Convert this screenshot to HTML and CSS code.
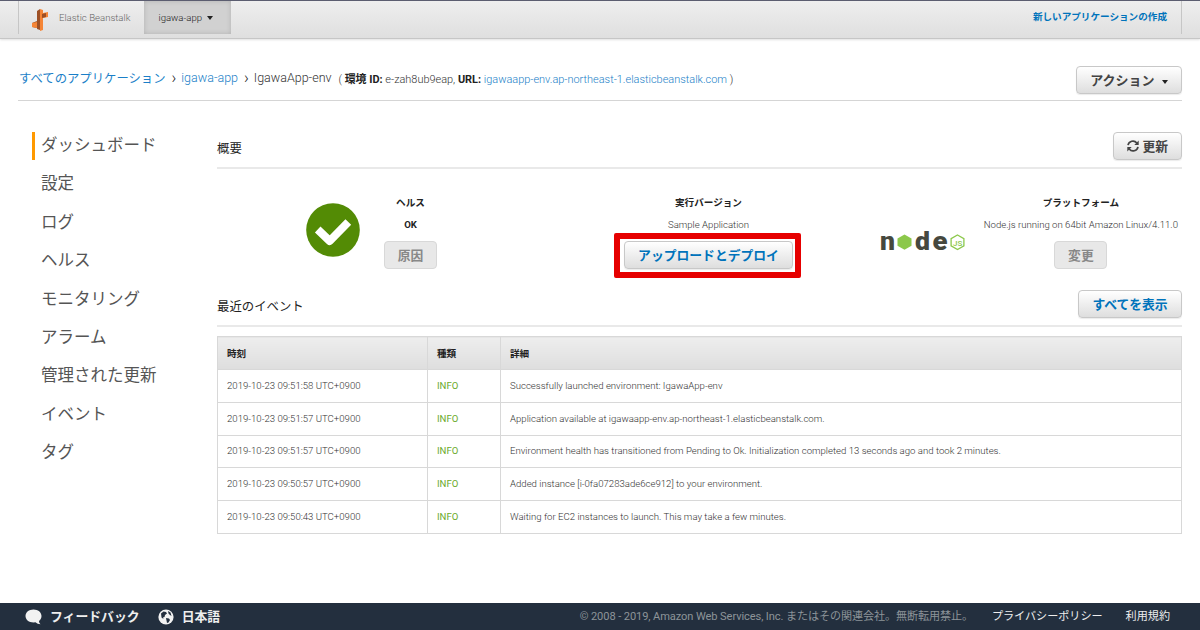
FILE: index.html
```
<!DOCTYPE html>
<html lang="ja">
<head>
    <meta charset="UTF-8">
    <meta name="viewport" content="width=device-width, initial-scale=1.0">
    <title>Elastic Beanstalk - IgawaApp-env</title>
    <link rel="stylesheet" href="styles.css">
</head>
<body>
    <header class="topbar">
        <div class="topbar-inner">
            <a class="brand" href="#">
                <svg width="17" height="22" viewBox="0 0 17 22">
                    <path fill="#9d5025" d="M5 2l3-2v21l-3-1zM0 14l5-2v7l-5-1z"/>
                    <path fill="#f58536" d="M8 0l3 1v20l-3 1zM0 14l5-1v6l-5-1zM11 4l5-1v5l-5 1z"/>
                    <path fill="#9d5025" d="M10 5l4-1v4l-4 1zM5 13l2 .5v4L5 17z"/>
                </svg>
                <span>Elastic Beanstalk</span>
            </a>
            <a class="app-menu" href="#">igawa-app <i class="caret"></i></a>
            <a class="create-app" href="#">新しいアプリケーションの作成</a>
        </div>
    </header>

    <div class="page-head">
        <div class="breadcrumb">
            <a class="jp" href="#">すべてのアプリケーション</a>
            <span class="sep">›</span>
            <a href="#">igawa-app</a>
            <span class="sep">›</span>
            <span>IgawaApp-env</span>
            <small>( <b>環境 ID:</b> e-zah8ub9eap, <b>URL:</b> <a href="#">igawaapp-env.ap-northeast-1.elasticbeanstalk.com</a> )</small>
        </div>
        <button class="btn btn-action">アクション <i class="caret"></i></button>
    </div>

    <div class="content">
        <nav class="sidebar">
            <a class="active" href="#">ダッシュボード</a>
            <a href="#">設定</a>
            <a href="#">ログ</a>
            <a href="#">ヘルス</a>
            <a href="#">モニタリング</a>
            <a href="#">アラーム</a>
            <a href="#">管理された更新</a>
            <a href="#">イベント</a>
            <a href="#">タグ</a>
        </nav>

        <main class="main">
            <div class="section-head">
                <h2>概要</h2>
                <button class="btn btn-refresh">
                    <svg width="12" height="12" viewBox="0 0 12 12" fill="none" stroke="#444" stroke-width="1.7">
                        <path d="M1 5.2A5 5 0 0 1 9.8 3M11 6.8A5 5 0 0 1 2.2 9"/>
                        <path fill="#444" stroke="none" d="M11.7.5v4.4H7.3zM.3 11.5V7.1h4.4z"/>
                    </svg>
                    更新
                </button>
            </div>

            <div class="summary">
                <div class="box health">
                    <svg width="54" height="54" viewBox="0 0 54 54">
                        <circle cx="27" cy="27" r="26.8" fill="#538b05"/>
                        <path d="M11.700 26.500L23.700 38L42.300 19" fill="none" stroke="#fff" stroke-width="8" stroke-linejoin="round"/>
                    </svg>
                    <div class="info">
                        <h3>ヘルス</h3>
                        <p class="status">OK</p>
                        <button class="btn btn-disabled">原因</button>
                    </div>
                </div>
                <div class="box version">
                    <div class="info">
                        <h3>実行バージョン</h3>
                        <p>Sample Application</p>
                        <div class="deploy">
                            <button class="btn btn-blue">アップロードとデプロイ</button>
                            <span class="highlight"></span>
                        </div>
                    </div>
                </div>
                <div class="box platform">
                    <svg class="node-logo" width="86" height="34" viewBox="0 -4 86 34">
                        <g fill="#46483e">
                            <text x="0" y="23.500" textLength="15" lengthAdjust="spacingAndGlyphs">n</text>
                            <text x="35" y="23.500" textLength="15" lengthAdjust="spacingAndGlyphs">d</text>
                            <text x="52.500" y="23.500" textLength="15" lengthAdjust="spacingAndGlyphs">e</text>
                        </g>
                        <path fill="#8cc84b" d="M24.500 8.500l7 3.900v7.400l-7 3.900l-7-3.900v-7.400z"/>
                        <path fill="none" stroke="#8cc84b" stroke-width="1.300" d="M77.500 9l6.400 3.600v7.300l-6.400 3.600l-6.400-3.600v-7.300z"/>
                        <text class="js" x="73" y="19.500">JS</text>
                    </svg>
                    <div class="info">
                        <h3>プラットフォーム</h3>
                        <p>Node.js running on 64bit Amazon Linux/4.11.0</p>
                        <button class="btn btn-disabled">変更</button>
                    </div>
                </div>
            </div>

            <div class="section-head">
                <h2>最近のイベント</h2>
                <button class="btn btn-blue btn-all">すべてを表示</button>
            </div>

            <table class="events">
                <thead>
                    <tr><th class="col-time">時刻</th><th class="col-type">種類</th><th>詳細</th></tr>
                </thead>
                <tbody>
                    <tr><td>2019-10-23 09:51:58 UTC+0900</td><td class="level">INFO</td><td>Successfully launched environment: IgawaApp-env</td></tr>
                    <tr><td>2019-10-23 09:51:57 UTC+0900</td><td class="level">INFO</td><td>Application available at igawaapp-env.ap-northeast-1.elasticbeanstalk.com.</td></tr>
                    <tr><td>2019-10-23 09:51:57 UTC+0900</td><td class="level">INFO</td><td>Environment health has transitioned from Pending to Ok. Initialization completed 13 seconds ago and took 2 minutes.</td></tr>
                    <tr><td>2019-10-23 09:50:57 UTC+0900</td><td class="level">INFO</td><td>Added instance [i-0fa07283ade6ce912] to your environment.</td></tr>
                    <tr><td>2019-10-23 09:50:43 UTC+0900</td><td class="level">INFO</td><td>Waiting for EC2 instances to launch. This may take a few minutes.</td></tr>
                </tbody>
            </table>
        </main>
    </div>

    <footer class="footer">
        <a class="foot-btn" href="#">
            <svg width="17" height="16" viewBox="0 0 17 16"><path fill="#f2f2f2" d="M8.500.5C4 .5.500 3.300.500 7s3.500 6.500 8 6.500l2-.2c1.300 1.300 3 2 5 2-1-1-1.500-2-1.500-3.300 1.600-1.200 2.500-3 2.500-5C16.500 3.300 13 .5 8.500.5z"/></svg>
            フィードバック
        </a>
        <a class="foot-btn lang" href="#">
            <svg width="16" height="16" viewBox="0 0 16 16">
                <circle cx="8" cy="8" r="7.600" fill="#f2f2f2"/>
                <path fill="#232f3e" d="M3 4.500L5.500 2.500l2.500.6 1 1.500-2 1.500-.5 2-1.500.5.500 1.500-2-1.500zM10 2l2.500 1.500 1 3.500-1.500-1-1.500-1.500zM8 9l3 .5 1 1.500-1.500 2.500-1.500.5-.5-2.500z"/>
            </svg>
            日本語
        </a>
        <span class="copyright">© 2008 - 2019, Amazon Web Services, Inc. またはその関連会社。無断転用禁止。</span>
        <a class="privacy" href="#">プライバシーポリシー</a>
        <a class="terms" href="#">利用規約</a>
    </footer>
</body>
</html>
```
FILE: styles.css
```
* {
    box-sizing: border-box;
}
body {
    margin: 0;
    height: 630px;
    display: flex;
    flex-direction: column;
    overflow: hidden;
    font-family: Roboto, "Noto Sans CJK JP", sans-serif;
    font-size: 9.6px;
    font-weight: 300;
    color: #333;
    background: #fff;
}
a {
    color: #1b7fc8;
    text-decoration: none;
}
h2, h3, p {
    margin: 0;
}
.caret {
    display: inline-block;
    border: 3.5px solid transparent;
    border-top: 4px solid #222;
    border-bottom: 0;
}

/* top bar */
.topbar {
    height: 39px;
    padding: 0 18px;
    border-top: 1px solid #5b5d70;
    border-bottom: 1px solid #c6c6c6;
    background: linear-gradient(#eee, #dfdfdf);
    box-shadow: 0 1px 2px rgba(0, 0, 0, 0.12);
}
.topbar-inner {
    height: 33px;
    display: flex;
    line-height: 33px;
    border-left: 1px solid #c6c6c6;
    border-right: 1px solid #c6c6c6;
}
.brand {
    width: 125px;
    padding-left: 13px;
    display: flex;
    align-items: center;
    color: #666;
}
.brand svg {
    margin: 4px 10px 0 0;
}
.app-menu {
    width: 87px;
    padding-left: 14.5px;
    color: #222;
    background: #d1d1d1;
    box-shadow: inset 0 0 5px rgba(0, 0, 0, 0.15);
}
.app-menu .caret {
    margin: 0 0 1px 3px;
}
.create-app {
    margin-left: auto;
    margin-right: 14px;
    line-height: 32px;
    font-weight: 700;
    color: #0073bb;
}

/* breadcrumb */
.page-head {
    height: 62px;
    margin: 0 18px;
    display: flex;
    justify-content: space-between;
    align-items: flex-start;
    padding-top: 27px;
    border-bottom: 1px solid #d5d5d5;
}
.breadcrumb {
    display: flex;
    align-items: center;
    margin-left: 1px;
    height: 23px;
    font-size: 12.5px;
    white-space: nowrap;
}
.breadcrumb .jp {
    font-size: 12.35px;
    font-weight: 400;
}
.breadcrumb .sep {
    margin: 0 5px 0 6px;
    font-size: 16px;
    font-weight: 300;
    color: #222;
}
.breadcrumb small {
    margin-left: 7px;
    font-size: 10.95px;
}
.breadcrumb b {
    font-weight: 700;
    color: #222;
}

.btn {
    height: 28px;
    padding: 1px 13px 0;
    border: 1px solid #c8c8c8;
    border-radius: 4px;
    background: linear-gradient(#fff, #dedede);
    font-family: inherit;
    font-size: 12.8px;
    font-weight: 700;
    line-height: 26px;
    color: #444;
    white-space: nowrap;
    box-shadow: 0 1px 1px rgba(0, 0, 0, 0.08);
}
.btn-action {
    width: 106px;
    padding: 1px 0 0;
    font-size: 13px;
}
.btn-action .caret {
    margin: 0 0 1px 4px;
}
.btn-blue {
    color: #0073bb;
}
.btn-all {
    width: 104px;
    padding: 1px 0 0;
}
.btn-disabled {
    width: 53px;
    padding: 1px 0 0;
    border-color: #d8d8d8;
    background: #e8e8e8;
    color: #888;
    box-shadow: none;
}

/* sidebar */
.content {
    flex: 1;
    display: flex;
    padding: 31px 18px 0 32px;
}
.sidebar {
    width: 185px;
}
.sidebar a {
    display: block;
    height: 28px;
    margin-bottom: 10.4px;
    padding-left: 6px;
    border-left: 3px solid transparent;
    font-size: 16.5px;
    font-weight: 400;
    line-height: 28px;
    color: #555;
}
.sidebar a.active {
    border-color: #f90;
}

/* main column */
.main {
    flex: 1;
}
.section-head {
    height: 37px;
    display: flex;
    justify-content: space-between;
    border-bottom: 2px solid #e9e9e9;
}
.section-head h2 {
    font-size: 12.4px;
    font-weight: 400;
    line-height: 33px;
    color: #222;
}
.btn-refresh svg {
    vertical-align: -1px;
}

.summary {
    height: 121px;
    padding-top: 24px;
    display: grid;
    grid-template-columns: 1fr 1fr 1fr;
    text-align: center;
}
.box {
    display: flex;
    align-items: flex-start;
}
.box h3 {
    height: 20px;
    font-size: 9.6px;
    font-weight: 700;
    line-height: 19px;
    color: #222;
}
.box p {
    height: 28px;
    line-height: 24px;
}
.box .status {
    font-weight: 700;
    color: #222;
}
.health {
    padding-left: 89px;
}
.health svg {
    margin: 10px 24px 0 0;
}
.version {
    justify-content: center;
}
.version .info {
    margin-left: 18px;
}
.deploy {
    position: relative;
}
.deploy .btn {
    width: 169px;
    padding: 1px 0 0;
}
.highlight {
    position: absolute;
    inset: -8px -8px -9px -10px;
    border: 6px solid #e60000;
    border-radius: 2px;
}
.platform {
    justify-content: flex-end;
    padding-right: 4px;
}
.node-logo {
    margin: 29px 18px 0 0;
    flex: none;
    overflow: visible;
}
.node-logo text {
    font-family: Roboto, sans-serif;
    font-size: 26px;
    font-weight: 900;
}
.node-logo .js {
    font-size: 8px;
    font-weight: 500;
    fill: #8cc84b;
}

/* events table */
.events {
    width: 100%;
    margin-top: 9px;
    border-collapse: collapse;
    table-layout: fixed;
}
.events th, .events td {
    height: 32.8px;
    padding: 0 9px 1px;
    border: 1px solid #d8d8d8;
    text-align: left;
}
.events th {
    height: 33px;
    background: linear-gradient(#eee, #dedede);
    font-weight: 700;
    color: #222;
}
.col-time {
    width: 210px;
}
.col-type {
    width: 73px;
}
.events .level {
    color: #6aaa2a;
    font-weight: 400;
}

/* footer */
.footer {
    height: 27px;
    padding: 0 30px 0 25px;
    display: flex;
    align-items: center;
    background: #232f3e;
    font-size: 11.1px;
    line-height: 26px;
    color: #999;
    white-space: nowrap;
}
.footer a {
    color: #eee;
}
.foot-btn {
    height: 26px;
    display: flex;
    align-items: center;
    gap: 8px;
    font-size: 12.85px;
    font-weight: 700;
}
.lang {
    margin-left: 18px;
}
.copyright {
    margin-left: auto;
    letter-spacing: -0.1px;
    font-weight: 400;
    color: #8d9499;
}
.privacy {
    margin-left: 19px;
    font-weight: 400;
}
.terms {
    margin-left: 23px;
    font-weight: 400;
}
```
